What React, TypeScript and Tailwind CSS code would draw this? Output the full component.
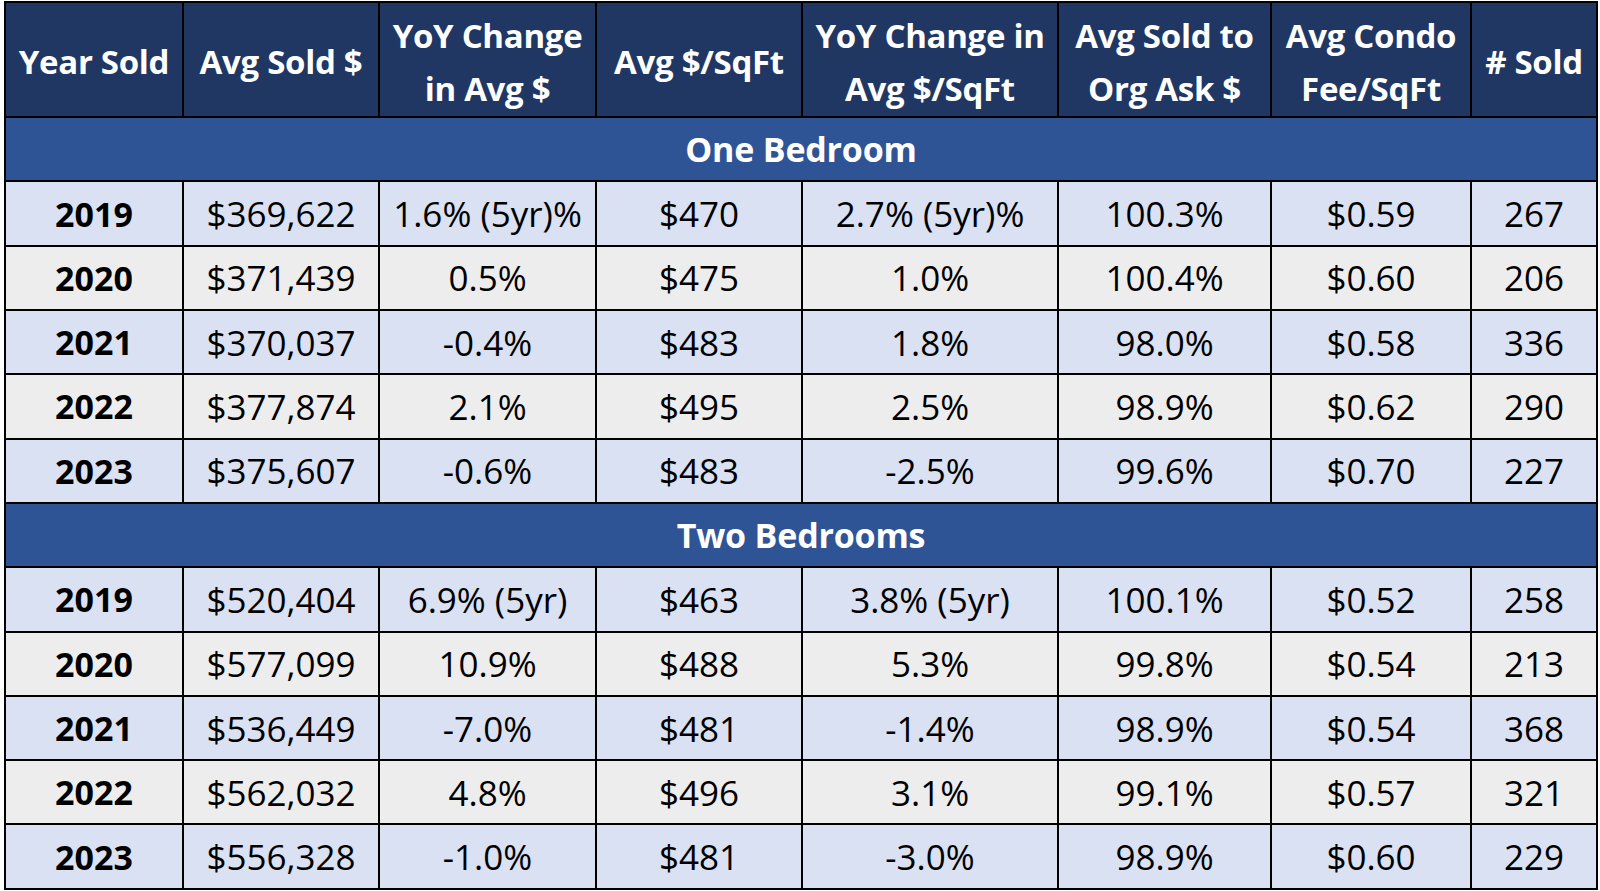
import React from "react";

const one = [
  ["2019", "$369,622", "1.6% (5yr)%", "$470", "2.7% (5yr)%", "100.3%", "$0.59", "267"],
  ["2020", "$371,439", "0.5%", "$475", "1.0%", "100.4%", "$0.60", "206"],
  ["2021", "$370,037", "-0.4%", "$483", "1.8%", "98.0%", "$0.58", "336"],
  ["2022", "$377,874", "2.1%", "$495", "2.5%", "98.9%", "$0.62", "290"],
  ["2023", "$375,607", "-0.6%", "$483", "-2.5%", "99.6%", "$0.70", "227"],
];
const two = [
  ["2019", "$520,404", "6.9% (5yr)", "$463", "3.8% (5yr)", "100.1%", "$0.52", "258"],
  ["2020", "$577,099", "10.9%", "$488", "5.3%", "99.8%", "$0.54", "213"],
  ["2021", "$536,449", "-7.0%", "$481", "-1.4%", "98.9%", "$0.54", "368"],
  ["2022", "$562,032", "4.8%", "$496", "3.1%", "99.1%", "$0.57", "321"],
  ["2023", "$556,328", "-1.0%", "$481", "-3.0%", "98.9%", "$0.60", "229"],
];

const widths = [178, 196, 217, 206, 256, 213, 200, 126];

const headers: string[][] = [
  ["Year Sold"],
  ["Avg Sold $"],
  ["YoY Change", "in Avg $"],
  ["Avg $/SqFt"],
  ["YoY Change in", "Avg $/SqFt"],
  ["Avg Sold to", "Org Ask $"],
  ["Avg Condo", "Fee/SqFt"],
  ["# Sold"],
];

function Section({ title }: { title: string }) {
  return (
    <tr className="h-[64.4px] bg-[#2f5496]">
      <td colSpan={8} className="border-2 border-black text-center font-bold text-white text-[34px] tracking-[-0.2px]">
        {title}
      </td>
    </tr>
  );
}

function Rows({ data }: { data: string[][] }) {
  return (
    <>
      {data.map((r, i) => (
        <tr key={i} className={"h-[64.3px] " + (i % 2 === 0 ? "bg-[#d9e1f2]" : "bg-[#ededed]")}>
          {r.map((c, j) => (
            <td
              key={j}
              className={
                "border-2 border-black text-center text-black whitespace-nowrap p-0 " +
                (j === 0 ? "font-bold text-[34px]" : "text-[35px]")
              }
            >
              {c}
            </td>
          ))}
        </tr>
      ))}
    </>
  );
}

export default function App() {
  return (
    <div className="w-[1600px] h-[891px] bg-white pt-[1px] pl-[4px]" style={{ fontFamily: "'Open Sans', Lato, sans-serif" }}>
      <table className="table-fixed border-collapse leading-none" style={{ width: 1594 }}>
        <colgroup>
          {widths.map((w, i) => (
            <col key={i} style={{ width: w }} />
          ))}
        </colgroup>
        <thead>
          <tr className="h-[115px] bg-[#203764]">
            {headers.map((h, i) => (
              <th key={i} className="border-2 border-black text-center font-bold text-white pt-[4px] px-0 pb-0 whitespace-nowrap text-[33px] tracking-[-0.3px]">
                {h.map((l, k) => (
                  <div key={k} className="leading-[53px]">
                    {l}
                  </div>
                ))}
              </th>
            ))}
          </tr>
        </thead>
        <tbody>
          <Section title="One Bedroom" />
          <Rows data={one} />
          <Section title="Two Bedrooms" />
          <Rows data={two} />
        </tbody>
      </table>
    </div>
  );
}
